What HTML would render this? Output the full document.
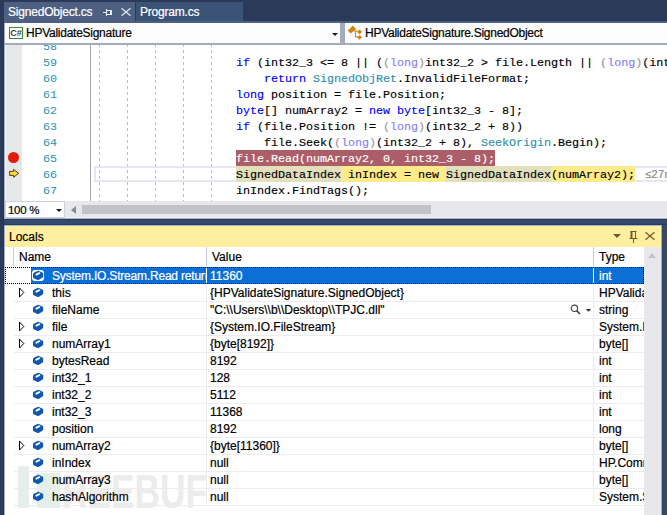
<!DOCTYPE html>
<html><head><meta charset="utf-8">
<style>
*{margin:0;padding:0;box-sizing:border-box}
html,body{width:667px;height:515px;overflow:hidden;background:#2b3a58;position:relative}
.a{position:absolute}
.ui{font-family:"Liberation Sans",sans-serif;font-size:12px;white-space:nowrap;line-height:normal;-webkit-text-stroke:0.2px currentColor}
.code{font-family:"Liberation Mono",monospace;font-size:11.75px;letter-spacing:-0.051px;white-space:pre;line-height:16px;color:#000;-webkit-text-stroke:0.15px currentColor}
.kw{color:#0000ff}
.ty{color:#2b91af}
.fd{color:#8680f2}
.fp{color:#9d9595}
.ln{font-family:"Liberation Mono",monospace;font-size:11.75px;letter-spacing:-0.051px;color:#2b91af;line-height:16px;text-align:right;width:40px}
.g{position:absolute;top:45px;width:1px;height:156px;background:repeating-linear-gradient(to bottom,#bdbdbd 0 3px,transparent 3px 6px);background-position:0 5px}
</style></head><body>
<div class="a" style="left:3px;top:21px;width:1px;height:494px;background:#253452;"></div>
<div class="a" style="left:662px;top:218px;width:5px;height:297px;background:#354a6b;"></div>
<div class="a" style="left:662px;top:218px;width:1px;height:297px;background:#2e4366;"></div>
<div class="a" style="left:4px;top:2px;width:131px;height:21px;background:#4d6082;"></div>
<div class="a ui" style="left:8px;top:5px;font-size:12px;color:#fff;letter-spacing:-0.2px">SignedObject.cs</div>
<div class="a" style="left:136px;top:2px;width:107px;height:19px;background:#3b5377;"></div>
<div class="a ui" style="left:140px;top:5px;font-size:12px;color:#fff;letter-spacing:-0.2px">Program.cs</div>
<div class="a" style="left:4px;top:21px;width:663px;height:2px;background:#4d6082;"></div>
<svg class="a" style="left:102px;top:8px" width="12" height="10" viewBox="0 0 12 10"><path d="M1 4.5 H5 M4.5 1 V8 M4.5 2.5 H9.5 M4.5 6.5 H9.5" fill="none" stroke="#e8ecf4" stroke-width="1"/><path d="M9 2 V7" stroke="#e8ecf4" stroke-width="2"/></svg>
<svg class="a" style="left:121px;top:8px" width="10" height="8" viewBox="0 0 10 8"><path d="M0.5 0.3 L9.5 7.7 M9.5 0.3 L0.5 7.7" stroke="#e0e5ee" stroke-width="1.3"/></svg>
<div class="a" style="left:4px;top:23px;width:663px;height:22px;background:#a2acbd;"></div>
<div class="a" style="left:5px;top:23px;width:335px;height:20px;background:#fcfcfc;"></div>
<div class="a" style="left:345px;top:23px;width:322px;height:20px;background:#fcfcfc;"></div>
<div class="a" style="left:9px;top:27px;width:14px;height:12px;border:1px solid #388a34;background:#fff;font-family:'Liberation Sans',sans-serif;font-size:9px;font-weight:bold;color:#404040;line-height:10px;letter-spacing:0px;text-align:center;-webkit-text-stroke:0">C#</div>
<div class="a ui" style="left:26px;top:26px;font-size:12px;color:#000;letter-spacing:-0.26px">HPValidateSignature</div>
<div class="a" style="left:332px;top:33px;width:0;height:0;border-left:3px solid transparent;border-right:3px solid transparent;border-top:3px solid #1e1e1e"></div>
<svg class="a" style="left:345px;top:24px" width="20" height="20" viewBox="0 0 20 20"><path d="M7.8 1.8 L11.2 5 L5.8 9.6 L2.7 6.6 Z" fill="#d08214"/><path d="M14.7 5.6 L17.1 8 L14.5 10.3 L12.1 7.9 Z M14.7 11 L17.1 13.3 L14.5 15.7 L12.1 13.3 Z" fill="#d08214"/><path d="M9 7 H13 M10.5 7 V12.8 H13" fill="none" stroke="#d08214" stroke-width="1.1"/></svg>
<div class="a ui" style="left:365px;top:26px;font-size:12px;color:#000;letter-spacing:-0.26px">HPValidateSignature.SignedObject</div>
<div class="a" style="left:4px;top:23px;width:1px;height:195px;background:#a5b0cc;"></div>
<div class="a" style="left:5px;top:45px;width:662px;height:156px;background:#fff;"></div>
<div class="a" style="left:5px;top:45px;width:1px;height:156px;background:#f2f2f2;"></div>
<div class="a" style="left:6px;top:45px;width:16px;height:156px;background:#e6e7e8;"></div>
<div class="a" style="left:90px;top:45px;width:1px;height:156px;background:#a5a5a5;"></div>
<div class="a" style="left:0;top:45px;width:667px;height:156px;overflow:hidden"><div class="a ln" style="left:17px;top:-6.3px">58<br>59<br>60<br>61<br>62<br>63<br>64<br>65<br>66<br>67</div></div>
<div class="g" style="left:99px"></div>
<div class="g" style="left:127px"></div>
<div class="g" style="left:155px"></div>
<div class="g" style="left:183px"></div>
<div class="g" style="left:211px"></div>
<div class="a" style="left:94px;top:166px;width:573px;height:16px;border:2px solid #e6e6f0;border-right:none"></div>
<div class="a" style="left:236px;top:150px;width:259px;height:16px;background:#ab5d68;"></div>
<div class="a" style="left:236px;top:166px;width:105px;height:16px;background:#e2e0bc;"></div>
<div class="a" style="left:341px;top:166px;width:105px;height:16px;background:#ffeb8a;"></div>
<div class="a" style="left:446px;top:166px;width:105px;height:16px;background:#e2e0bc;"></div>
<div class="a" style="left:551px;top:166px;width:84px;height:16px;background:#ffeb8a;"></div>
<div class="a code" style="left:96px;top:55px">                    <span class="kw">if</span> (int32_3 &lt;= 8 || (<span class="fp">(</span><span class="fd">long</span><span class="fp">)</span>int32_2 &gt; file.Length || <span class="fp">(</span><span class="fd">long</span><span class="fp">)</span>(int32_3 - 8)
                        <span class="kw">return</span> <span class="ty">SignedObjRet</span>.InvalidFileFormat;
                    <span class="kw">long</span> position = file.Position;
                    <span class="kw">byte</span>[] numArray2 = <span class="kw">new</span> <span class="kw">byte</span>[int32_3 - 8];
                    <span class="kw">if</span> (file.Position != <span class="fp">(</span><span class="fd">long</span><span class="fp">)</span>(int32_2 + 8))
                        file.Seek(<span class="fp">(</span><span class="fd">long</span><span class="fp">)</span>(int32_2 + 8), <span class="ty">SeekOrigin</span>.Begin);
                    <span style="color:#fff">file.Read(numArray2, 0, int32_3 - 8);</span>
                    SignedDataIndex inIndex = new SignedDataIndex(numArray2);
                    inIndex.FindTags();</div>
<div class="a" style="left:7.6px;top:151.8px;width:11.4px;height:11.4px;border-radius:50%;background:#e61a0a"></div>
<svg class="a" style="left:8px;top:168px" width="12" height="11" viewBox="0 0 12 11"><path d="M1.6 3.4 H5.6 V1.4 L10.6 5.3 L5.6 9.3 V7.4 H1.6 Z" fill="#ffd92e" stroke="#4a4020" stroke-width="1" stroke-linejoin="round"/></svg>
<div class="a ui" style="left:645px;top:168px;font-size:11px;color:#8a8a8a;letter-spacing:0.4px">&#8804;27ms elapsed</div>
<div class="a" style="left:5px;top:201px;width:662px;height:17px;background:#e8e8ec;"></div>
<div class="a" style="left:5px;top:217px;width:662px;height:1px;background:#f0f0f4;"></div>
<div class="a" style="left:4px;top:218px;width:663px;height:1px;background:#a5b0cc;"></div>
<div class="a" style="left:5px;top:201px;width:60px;height:17px;background:#fff;border:1px solid #ccd2dc"></div>
<div class="a ui" style="left:8px;top:204px;font-size:11.5px;color:#000;letter-spacing:-0.3px">100 %</div>
<div class="a" style="left:56px;top:209px;width:0;height:0;border-left:3px solid transparent;border-right:3px solid transparent;border-top:3px solid #1e1e1e"></div>
<div class="a" style="left:71px;top:206px;width:0;height:0;border-top:4px solid transparent;border-bottom:4px solid transparent;border-right:5px solid #868999"></div>
<div class="a" style="left:82px;top:205px;width:349px;height:9px;background:#c2c3c9;"></div>
<div class="a" style="left:4px;top:219px;width:663px;height:6px;background:#34496b;"></div>
<div class="a" style="left:4px;top:219px;width:663px;height:1px;background:#2c3d5c;"></div>
<div class="a" style="left:4px;top:224px;width:663px;height:1px;background:#2c3d5c;"></div>
<div class="a" style="left:4px;top:225px;width:658px;height:290px;background:#a5b0cc;"></div>
<div class="a" style="left:5px;top:226px;width:656px;height:21px;background:#ffef9e;"></div>
<div class="a ui" style="left:9px;top:230px;font-size:12px;color:#000;">Locals</div>
<div class="a" style="left:5px;top:247px;width:639px;height:268px;background:#fff;"></div>
<div class="a" style="left:644px;top:247px;width:17px;height:268px;background:#e8e8ec;"></div>
<div class="a" style="left:18px;top:466px;width:11px;height:42px;background:#e3efe8;"></div>
<div class="a" style="left:37px;top:473px;width:23px;height:35px;background:#e3efe8;"></div>
<div class="a" style="left:62px;top:468px;font-family:'Liberation Sans',sans-serif;font-weight:bold;font-size:48px;line-height:48px;color:#ececec;transform:scaleX(0.735);transform-origin:0 0;white-space:nowrap">REEBUF</div>
<div class="a" style="left:13px;top:247px;width:1px;height:19px;background:#c8ccd8;"></div>
<div class="a" style="left:206px;top:247px;width:1px;height:19px;background:#c8ccd8;"></div>
<div class="a" style="left:593px;top:247px;width:1px;height:19px;background:#c8ccd8;"></div>
<div class="a ui" style="left:19px;top:250px;font-size:12px;color:#000;">Name</div>
<div class="a ui" style="left:212px;top:250px;font-size:12px;color:#000;">Value</div>
<div class="a ui" style="left:599px;top:250px;font-size:12px;color:#000;">Type</div>
<div class="a" style="left:31px;top:267px;width:613px;height:17px;background:#0b6fd8;"></div>
<div class="a" style="left:5px;top:267px;width:639px;height:17px;border:1px dotted #000"></div>
<div class="a" style="left:206px;top:268px;width:1px;height:15px;background:#fff;"></div>
<div class="a" style="left:593px;top:268px;width:1px;height:15px;background:#fff;"></div>
<div class="a" style="left:32px;top:270px;width:12px;height:11px;background:#fff;border-radius:3px"></div>
<svg class="a" style="left:32px;top:270px" width="12" height="11" viewBox="0 0 12 11" overflow="visible"><path d="M1 4.2 Q1 3 2.2 2.4 L5.6 0.9 Q6.3 0.6 7 0.9 L11.2 2.9 L11.2 6.6 Q11.2 7.2 10.6 7.6 L7 9.8 Q6.3 10.2 5.6 9.9 L1.6 8.2 Q1 7.9 1 7.2 Z" fill="#0f58ae"/><path d="M4.4 4.6 L7.3 3.2" stroke="#fff" stroke-width="2" stroke-linecap="round"/></svg>
<div class="a ui" style="left:52px;top:269px;font-size:12px;color:#fff;width:154px;overflow:hidden;letter-spacing:-0.2px">System.IO.Stream.Read returned</div>
<div class="a ui" style="left:210px;top:269px;font-size:12px;color:#fff;width:382px;overflow:hidden">11360</div>
<div class="a ui" style="left:599px;top:269px;font-size:12px;color:#fff;width:45px;overflow:hidden">int</div>
<div class="a" style="left:14px;top:301px;width:630px;height:1px;background:#ececec;"></div>
<div class="a" style="left:206px;top:284px;width:1px;height:17px;background:#ececec;"></div>
<div class="a" style="left:593px;top:284px;width:1px;height:17px;background:#ececec;"></div>
<svg class="a" style="left:18px;top:287px" width="8" height="11" viewBox="0 0 8 11"><path d="M1.5 1 L1.5 10 L5.8 5.5 Z" fill="none" stroke="#000" stroke-width="1"/></svg>
<svg class="a" style="left:32px;top:287px" width="12" height="11" viewBox="0 0 12 11" overflow="visible"><path d="M1 4.2 Q1 3 2.2 2.4 L5.6 0.9 Q6.3 0.6 7 0.9 L11.2 2.9 L11.2 6.6 Q11.2 7.2 10.6 7.6 L7 9.8 Q6.3 10.2 5.6 9.9 L1.6 8.2 Q1 7.9 1 7.2 Z" fill="#0f58ae"/><path d="M4.4 4.6 L7.3 3.2" stroke="#fff" stroke-width="2" stroke-linecap="round"/></svg>
<div class="a ui" style="left:52px;top:286px;font-size:12px;color:#000;width:154px;overflow:hidden">this</div>
<div class="a ui" style="left:210px;top:286px;font-size:12px;color:#000;width:382px;overflow:hidden">{HPValidateSignature.SignedObject}</div>
<div class="a ui" style="left:599px;top:286px;font-size:12px;color:#000;width:45px;overflow:hidden">HPValidateSignature.SignedObject</div>
<div class="a" style="left:14px;top:318px;width:630px;height:1px;background:#ececec;"></div>
<div class="a" style="left:206px;top:301px;width:1px;height:17px;background:#ececec;"></div>
<div class="a" style="left:593px;top:301px;width:1px;height:17px;background:#ececec;"></div>
<svg class="a" style="left:32px;top:304px" width="12" height="11" viewBox="0 0 12 11" overflow="visible"><path d="M1 4.2 Q1 3 2.2 2.4 L5.6 0.9 Q6.3 0.6 7 0.9 L11.2 2.9 L11.2 6.6 Q11.2 7.2 10.6 7.6 L7 9.8 Q6.3 10.2 5.6 9.9 L1.6 8.2 Q1 7.9 1 7.2 Z" fill="#0f58ae"/><path d="M4.4 4.6 L7.3 3.2" stroke="#fff" stroke-width="2" stroke-linecap="round"/></svg>
<div class="a ui" style="left:52px;top:303px;font-size:12px;color:#000;width:154px;overflow:hidden">fileName</div>
<div class="a ui" style="left:210px;top:303px;font-size:12px;color:#000;width:382px;overflow:hidden">"C:\\Users\\b\\Desktop\\TPJC.dll"</div>
<div class="a ui" style="left:599px;top:303px;font-size:12px;color:#000;width:45px;overflow:hidden">string</div>
<div class="a" style="left:14px;top:335px;width:630px;height:1px;background:#ececec;"></div>
<div class="a" style="left:206px;top:318px;width:1px;height:17px;background:#ececec;"></div>
<div class="a" style="left:593px;top:318px;width:1px;height:17px;background:#ececec;"></div>
<svg class="a" style="left:18px;top:321px" width="8" height="11" viewBox="0 0 8 11"><path d="M1.5 1 L1.5 10 L5.8 5.5 Z" fill="none" stroke="#000" stroke-width="1"/></svg>
<svg class="a" style="left:32px;top:321px" width="12" height="11" viewBox="0 0 12 11" overflow="visible"><path d="M1 4.2 Q1 3 2.2 2.4 L5.6 0.9 Q6.3 0.6 7 0.9 L11.2 2.9 L11.2 6.6 Q11.2 7.2 10.6 7.6 L7 9.8 Q6.3 10.2 5.6 9.9 L1.6 8.2 Q1 7.9 1 7.2 Z" fill="#0f58ae"/><path d="M4.4 4.6 L7.3 3.2" stroke="#fff" stroke-width="2" stroke-linecap="round"/></svg>
<div class="a ui" style="left:52px;top:320px;font-size:12px;color:#000;width:154px;overflow:hidden">file</div>
<div class="a ui" style="left:210px;top:320px;font-size:12px;color:#000;width:382px;overflow:hidden">{System.IO.FileStream}</div>
<div class="a ui" style="left:599px;top:320px;font-size:12px;color:#000;width:45px;overflow:hidden">System.IO.FileStream</div>
<div class="a" style="left:14px;top:352px;width:630px;height:1px;background:#ececec;"></div>
<div class="a" style="left:206px;top:335px;width:1px;height:17px;background:#ececec;"></div>
<div class="a" style="left:593px;top:335px;width:1px;height:17px;background:#ececec;"></div>
<svg class="a" style="left:18px;top:338px" width="8" height="11" viewBox="0 0 8 11"><path d="M1.5 1 L1.5 10 L5.8 5.5 Z" fill="none" stroke="#000" stroke-width="1"/></svg>
<svg class="a" style="left:32px;top:338px" width="12" height="11" viewBox="0 0 12 11" overflow="visible"><path d="M1 4.2 Q1 3 2.2 2.4 L5.6 0.9 Q6.3 0.6 7 0.9 L11.2 2.9 L11.2 6.6 Q11.2 7.2 10.6 7.6 L7 9.8 Q6.3 10.2 5.6 9.9 L1.6 8.2 Q1 7.9 1 7.2 Z" fill="#0f58ae"/><path d="M4.4 4.6 L7.3 3.2" stroke="#fff" stroke-width="2" stroke-linecap="round"/></svg>
<div class="a ui" style="left:52px;top:337px;font-size:12px;color:#000;width:154px;overflow:hidden">numArray1</div>
<div class="a ui" style="left:210px;top:337px;font-size:12px;color:#000;width:382px;overflow:hidden">{byte[8192]}</div>
<div class="a ui" style="left:599px;top:337px;font-size:12px;color:#000;width:45px;overflow:hidden">byte[]</div>
<div class="a" style="left:14px;top:369px;width:630px;height:1px;background:#ececec;"></div>
<div class="a" style="left:206px;top:352px;width:1px;height:17px;background:#ececec;"></div>
<div class="a" style="left:593px;top:352px;width:1px;height:17px;background:#ececec;"></div>
<svg class="a" style="left:32px;top:355px" width="12" height="11" viewBox="0 0 12 11" overflow="visible"><path d="M1 4.2 Q1 3 2.2 2.4 L5.6 0.9 Q6.3 0.6 7 0.9 L11.2 2.9 L11.2 6.6 Q11.2 7.2 10.6 7.6 L7 9.8 Q6.3 10.2 5.6 9.9 L1.6 8.2 Q1 7.9 1 7.2 Z" fill="#0f58ae"/><path d="M4.4 4.6 L7.3 3.2" stroke="#fff" stroke-width="2" stroke-linecap="round"/></svg>
<div class="a ui" style="left:52px;top:354px;font-size:12px;color:#000;width:154px;overflow:hidden">bytesRead</div>
<div class="a ui" style="left:210px;top:354px;font-size:12px;color:#000;width:382px;overflow:hidden">8192</div>
<div class="a ui" style="left:599px;top:354px;font-size:12px;color:#000;width:45px;overflow:hidden">int</div>
<div class="a" style="left:14px;top:386px;width:630px;height:1px;background:#ececec;"></div>
<div class="a" style="left:206px;top:369px;width:1px;height:17px;background:#ececec;"></div>
<div class="a" style="left:593px;top:369px;width:1px;height:17px;background:#ececec;"></div>
<svg class="a" style="left:32px;top:372px" width="12" height="11" viewBox="0 0 12 11" overflow="visible"><path d="M1 4.2 Q1 3 2.2 2.4 L5.6 0.9 Q6.3 0.6 7 0.9 L11.2 2.9 L11.2 6.6 Q11.2 7.2 10.6 7.6 L7 9.8 Q6.3 10.2 5.6 9.9 L1.6 8.2 Q1 7.9 1 7.2 Z" fill="#0f58ae"/><path d="M4.4 4.6 L7.3 3.2" stroke="#fff" stroke-width="2" stroke-linecap="round"/></svg>
<div class="a ui" style="left:52px;top:371px;font-size:12px;color:#000;width:154px;overflow:hidden">int32_1</div>
<div class="a ui" style="left:210px;top:371px;font-size:12px;color:#000;width:382px;overflow:hidden">128</div>
<div class="a ui" style="left:599px;top:371px;font-size:12px;color:#000;width:45px;overflow:hidden">int</div>
<div class="a" style="left:14px;top:403px;width:630px;height:1px;background:#ececec;"></div>
<div class="a" style="left:206px;top:386px;width:1px;height:17px;background:#ececec;"></div>
<div class="a" style="left:593px;top:386px;width:1px;height:17px;background:#ececec;"></div>
<svg class="a" style="left:32px;top:389px" width="12" height="11" viewBox="0 0 12 11" overflow="visible"><path d="M1 4.2 Q1 3 2.2 2.4 L5.6 0.9 Q6.3 0.6 7 0.9 L11.2 2.9 L11.2 6.6 Q11.2 7.2 10.6 7.6 L7 9.8 Q6.3 10.2 5.6 9.9 L1.6 8.2 Q1 7.9 1 7.2 Z" fill="#0f58ae"/><path d="M4.4 4.6 L7.3 3.2" stroke="#fff" stroke-width="2" stroke-linecap="round"/></svg>
<div class="a ui" style="left:52px;top:388px;font-size:12px;color:#000;width:154px;overflow:hidden">int32_2</div>
<div class="a ui" style="left:210px;top:388px;font-size:12px;color:#000;width:382px;overflow:hidden">5112</div>
<div class="a ui" style="left:599px;top:388px;font-size:12px;color:#000;width:45px;overflow:hidden">int</div>
<div class="a" style="left:14px;top:420px;width:630px;height:1px;background:#ececec;"></div>
<div class="a" style="left:206px;top:403px;width:1px;height:17px;background:#ececec;"></div>
<div class="a" style="left:593px;top:403px;width:1px;height:17px;background:#ececec;"></div>
<svg class="a" style="left:32px;top:406px" width="12" height="11" viewBox="0 0 12 11" overflow="visible"><path d="M1 4.2 Q1 3 2.2 2.4 L5.6 0.9 Q6.3 0.6 7 0.9 L11.2 2.9 L11.2 6.6 Q11.2 7.2 10.6 7.6 L7 9.8 Q6.3 10.2 5.6 9.9 L1.6 8.2 Q1 7.9 1 7.2 Z" fill="#0f58ae"/><path d="M4.4 4.6 L7.3 3.2" stroke="#fff" stroke-width="2" stroke-linecap="round"/></svg>
<div class="a ui" style="left:52px;top:405px;font-size:12px;color:#000;width:154px;overflow:hidden">int32_3</div>
<div class="a ui" style="left:210px;top:405px;font-size:12px;color:#000;width:382px;overflow:hidden">11368</div>
<div class="a ui" style="left:599px;top:405px;font-size:12px;color:#000;width:45px;overflow:hidden">int</div>
<div class="a" style="left:14px;top:437px;width:630px;height:1px;background:#ececec;"></div>
<div class="a" style="left:206px;top:420px;width:1px;height:17px;background:#ececec;"></div>
<div class="a" style="left:593px;top:420px;width:1px;height:17px;background:#ececec;"></div>
<svg class="a" style="left:32px;top:423px" width="12" height="11" viewBox="0 0 12 11" overflow="visible"><path d="M1 4.2 Q1 3 2.2 2.4 L5.6 0.9 Q6.3 0.6 7 0.9 L11.2 2.9 L11.2 6.6 Q11.2 7.2 10.6 7.6 L7 9.8 Q6.3 10.2 5.6 9.9 L1.6 8.2 Q1 7.9 1 7.2 Z" fill="#0f58ae"/><path d="M4.4 4.6 L7.3 3.2" stroke="#fff" stroke-width="2" stroke-linecap="round"/></svg>
<div class="a ui" style="left:52px;top:422px;font-size:12px;color:#000;width:154px;overflow:hidden">position</div>
<div class="a ui" style="left:210px;top:422px;font-size:12px;color:#000;width:382px;overflow:hidden">8192</div>
<div class="a ui" style="left:599px;top:422px;font-size:12px;color:#000;width:45px;overflow:hidden">long</div>
<div class="a" style="left:14px;top:454px;width:630px;height:1px;background:#ececec;"></div>
<div class="a" style="left:206px;top:437px;width:1px;height:17px;background:#ececec;"></div>
<div class="a" style="left:593px;top:437px;width:1px;height:17px;background:#ececec;"></div>
<svg class="a" style="left:18px;top:440px" width="8" height="11" viewBox="0 0 8 11"><path d="M1.5 1 L1.5 10 L5.8 5.5 Z" fill="none" stroke="#000" stroke-width="1"/></svg>
<svg class="a" style="left:32px;top:440px" width="12" height="11" viewBox="0 0 12 11" overflow="visible"><path d="M1 4.2 Q1 3 2.2 2.4 L5.6 0.9 Q6.3 0.6 7 0.9 L11.2 2.9 L11.2 6.6 Q11.2 7.2 10.6 7.6 L7 9.8 Q6.3 10.2 5.6 9.9 L1.6 8.2 Q1 7.9 1 7.2 Z" fill="#0f58ae"/><path d="M4.4 4.6 L7.3 3.2" stroke="#fff" stroke-width="2" stroke-linecap="round"/></svg>
<div class="a ui" style="left:52px;top:439px;font-size:12px;color:#000;width:154px;overflow:hidden">numArray2</div>
<div class="a ui" style="left:210px;top:439px;font-size:12px;color:#000;width:382px;overflow:hidden">{byte[11360]}</div>
<div class="a ui" style="left:599px;top:439px;font-size:12px;color:#000;width:45px;overflow:hidden">byte[]</div>
<div class="a" style="left:14px;top:471px;width:630px;height:1px;background:#ececec;"></div>
<div class="a" style="left:206px;top:454px;width:1px;height:17px;background:#ececec;"></div>
<div class="a" style="left:593px;top:454px;width:1px;height:17px;background:#ececec;"></div>
<svg class="a" style="left:32px;top:457px" width="12" height="11" viewBox="0 0 12 11" overflow="visible"><path d="M1 4.2 Q1 3 2.2 2.4 L5.6 0.9 Q6.3 0.6 7 0.9 L11.2 2.9 L11.2 6.6 Q11.2 7.2 10.6 7.6 L7 9.8 Q6.3 10.2 5.6 9.9 L1.6 8.2 Q1 7.9 1 7.2 Z" fill="#0f58ae"/><path d="M4.4 4.6 L7.3 3.2" stroke="#fff" stroke-width="2" stroke-linecap="round"/></svg>
<div class="a ui" style="left:52px;top:456px;font-size:12px;color:#000;width:154px;overflow:hidden">inIndex</div>
<div class="a ui" style="left:210px;top:456px;font-size:12px;color:#000;width:382px;overflow:hidden">null</div>
<div class="a ui" style="left:599px;top:456px;font-size:12px;color:#000;width:45px;overflow:hidden">HP.Common.SignedDataIndex</div>
<div class="a" style="left:14px;top:488px;width:630px;height:1px;background:#ececec;"></div>
<div class="a" style="left:206px;top:471px;width:1px;height:17px;background:#ececec;"></div>
<div class="a" style="left:593px;top:471px;width:1px;height:17px;background:#ececec;"></div>
<svg class="a" style="left:32px;top:474px" width="12" height="11" viewBox="0 0 12 11" overflow="visible"><path d="M1 4.2 Q1 3 2.2 2.4 L5.6 0.9 Q6.3 0.6 7 0.9 L11.2 2.9 L11.2 6.6 Q11.2 7.2 10.6 7.6 L7 9.8 Q6.3 10.2 5.6 9.9 L1.6 8.2 Q1 7.9 1 7.2 Z" fill="#0f58ae"/><path d="M4.4 4.6 L7.3 3.2" stroke="#fff" stroke-width="2" stroke-linecap="round"/></svg>
<div class="a ui" style="left:52px;top:473px;font-size:12px;color:#000;width:154px;overflow:hidden">numArray3</div>
<div class="a ui" style="left:210px;top:473px;font-size:12px;color:#000;width:382px;overflow:hidden">null</div>
<div class="a ui" style="left:599px;top:473px;font-size:12px;color:#000;width:45px;overflow:hidden">byte[]</div>
<div class="a" style="left:14px;top:505px;width:630px;height:1px;background:#ececec;"></div>
<div class="a" style="left:206px;top:488px;width:1px;height:17px;background:#ececec;"></div>
<div class="a" style="left:593px;top:488px;width:1px;height:17px;background:#ececec;"></div>
<svg class="a" style="left:32px;top:491px" width="12" height="11" viewBox="0 0 12 11" overflow="visible"><path d="M1 4.2 Q1 3 2.2 2.4 L5.6 0.9 Q6.3 0.6 7 0.9 L11.2 2.9 L11.2 6.6 Q11.2 7.2 10.6 7.6 L7 9.8 Q6.3 10.2 5.6 9.9 L1.6 8.2 Q1 7.9 1 7.2 Z" fill="#0f58ae"/><path d="M4.4 4.6 L7.3 3.2" stroke="#fff" stroke-width="2" stroke-linecap="round"/></svg>
<div class="a ui" style="left:52px;top:490px;font-size:12px;color:#000;width:154px;overflow:hidden">hashAlgorithm</div>
<div class="a ui" style="left:210px;top:490px;font-size:12px;color:#000;width:382px;overflow:hidden">null</div>
<div class="a ui" style="left:599px;top:490px;font-size:12px;color:#000;width:45px;overflow:hidden">System.Security.Cryptography.HashAlgorithm</div>
<div class="a" style="left:613px;top:234px;width:0;height:0;border-left:4px solid transparent;border-right:4px solid transparent;border-top:4px solid #6d5c35"></div>
<svg class="a" style="left:629px;top:231px" width="9" height="12" viewBox="0 0 9 12"><path d="M1.5 0.5 H7.5 M6.5 0.5 V7.5 M0.5 7.5 H8.5 M4.5 7.5 V12" fill="none" stroke="#6d5c35" stroke-width="1"/><path d="M2.5 0 V7.5" stroke="#6d5c35" stroke-width="2"/></svg>
<svg class="a" style="left:645px;top:232px" width="10" height="8" viewBox="0 0 10 8"><path d="M0.5 0.3 L9.5 7.7 M9.5 0.3 L0.5 7.7" stroke="#6d5c35" stroke-width="1.3"/></svg>
<div class="a" style="left:648px;top:253px;width:0;height:0;border-left:4.5px solid transparent;border-right:4.5px solid transparent;border-bottom:5px solid #c2c3c9"></div>
<svg class="a" style="left:569px;top:304px" width="24" height="12" viewBox="0 0 24 12"><circle cx="5.4" cy="4.3" r="3.2" fill="none" stroke="#424242" stroke-width="1.1"/><path d="M7.6 6.6 L11 10" stroke="#424242" stroke-width="1.7"/><path d="M16.8 5 H22.2 L19.5 7.8 Z" fill="#333"/></svg>
</body></html>
